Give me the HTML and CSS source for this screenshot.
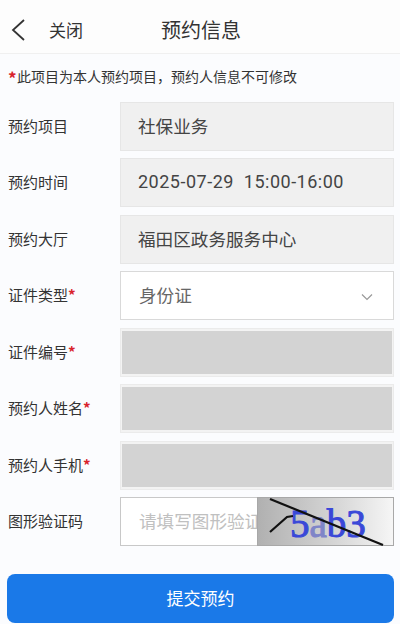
FILE: index.html
```html
<!DOCTYPE html>
<html lang="zh-CN">
<head>
<meta charset="UTF-8">
<meta name="viewport" content="width=device-width, initial-scale=1.0">
<title>预约信息</title>
<link rel="stylesheet" href="styles.css">
</head>
<body>

<div class="header">
  <svg class="back" width="16" height="24" viewBox="0 0 16 24">
    <path d="M14 2 L3 12 L14 22" fill="none" stroke="#333" stroke-width="1.8"/>
  </svg>
  <span class="close">关闭</span>
  <span class="title">预约信息</span>
</div>

<div class="notice"><span class="notice-star">*</span>此项目为本人预约项目，预约人信息不可修改</div>

<div class="form">
  <div class="row">
    <div class="label">预约项目</div>
    <div class="field readonly">社保业务</div>
  </div>
  <div class="row">
    <div class="label">预约时间</div>
    <div class="field readonly time">2025-07-29&nbsp;&nbsp;15:00-16:00</div>
  </div>
  <div class="row">
    <div class="label">预约大厅</div>
    <div class="field readonly">福田区政务服务中心</div>
  </div>
  <div class="row">
    <div class="label">证件类型<span class="star">*</span></div>
    <div class="field select">
      <span>身份证</span>
      <svg class="chevron" width="12" height="8" viewBox="0 0 12 8">
        <path d="M1 1.5 L6 6.5 L11 1.5" fill="none" stroke="#999" stroke-width="1.2"/>
      </svg>
    </div>
  </div>
  <div class="row">
    <div class="label">证件编号<span class="star">*</span></div>
    <div class="field masked"><div class="mask"></div></div>
  </div>
  <div class="row">
    <div class="label">预约人姓名<span class="star">*</span></div>
    <div class="field masked"><div class="mask"></div></div>
  </div>
  <div class="row">
    <div class="label">预约人手机<span class="star">*</span></div>
    <div class="field masked"><div class="mask"></div></div>
  </div>
  <div class="row">
    <div class="label">图形验证码</div>
    <div class="field captcha">
      <span class="placeholder">请填写图形验证码</span>
      <svg class="captcha-img" width="137" height="49" viewBox="0 0 137 49">
        <defs>
          <linearGradient id="captchaBg" x1="0" y1="0" x2="1" y2="0">
            <stop offset="0" stop-color="#b0b0b0"/>
            <stop offset="0.55" stop-color="#d4d4d4"/>
            <stop offset="1" stop-color="#f6f6f6"/>
          </linearGradient>
        </defs>
        <rect width="137" height="49" fill="url(#captchaBg)"/>
        <rect x="0.5" y="0.5" width="136" height="48" fill="none" stroke="#a8a8a8"/>
        <text x="33" y="40" class="captcha-text">5<tspan class="faint">a</tspan>b3</text>
        <path d="M13 2 L126 48" stroke="#111" stroke-width="2.2" fill="none"/>
        <path d="M13 35 L30 20 L36 19" stroke="#111" stroke-width="2.2" fill="none"/>
      </svg>
    </div>
  </div>
</div>

<div class="footer">
  <button class="submit">提交预约</button>
</div>

</body>
</html>
```

FILE: styles.css
```css
body {
  margin: 0;
  width: 400px;
  height: 624px;
  overflow: hidden;
  background: #fbfcfe;
  color: #333;
  font-family: "Noto Sans CJK SC", "Liberation Sans", sans-serif;
}

.header {
  height: 54px;
  box-sizing: border-box;
  display: flex;
  align-items: center;
  padding-left: 10px;
  padding-top: 6px;
  background: #fdfdfd;
  border-bottom: 1px solid #f0f0f0;
}

.close {
  margin-left: 23px;
  width: 112px;
  font-size: 17px;
}

.title {
  font-size: 20px;
}

.notice {
  height: 48px;
  box-sizing: border-box;
  padding: 12px 0 0 8px;
  font-size: 14px;
  line-height: 20px;
}

.notice-star {
  display: inline-block;
  width: 9px;
  color: #d9232c;
  font-size: 17px;
  font-weight: bold;
  line-height: 14px;
  vertical-align: top;
  margin-top: 5px;
}

.star {
  color: #d9232c;
  font-weight: bold;
}

.form {
  display: flex;
  flex-direction: column;
  gap: 7.43px;
}

.row {
  display: flex;
  align-items: center;
  padding: 0 6px 0 8px;
}

.label {
  width: 112px;
  flex-shrink: 0;
  padding-bottom: 2px;
  font-size: 15px;
  white-space: nowrap;
}

.field {
  flex: 1;
  height: 49px;
  box-sizing: border-box;
  display: flex;
  align-items: center;
  padding-bottom: 2px;
  border: 1px solid #d9d9d9;
  background: #fff;
  font-size: 17.6px;
}

.readonly {
  background: #f0f0f0;
  border-color: #e6e6e6;
  padding-left: 17px;
  color: #444;
}

.time {
  font-family: Roboto, "Liberation Sans", sans-serif;
  font-size: 18px;
  letter-spacing: 0.5px;
}

.select {
  justify-content: space-between;
  padding: 0 20px 2px 18px;
  color: #666;
}

.chevron {
  margin-top: 4px;
}

.masked {
  background: #f3f3f3;
  border-color: #ebebeb;
  padding: 2px 1px;
}

.mask {
  width: 100%;
  height: 100%;
  background: #d3d3d3;
}

.captcha {
  position: relative;
  padding-left: 18px;
  border-color: #c8c8c8;
}

.placeholder {
  color: #c0c0c0;
  white-space: nowrap;
}

/* the picture sits over the end of the input */
.captcha-img {
  position: absolute;
  top: -1px;
  right: -1px;
}

.captcha-text {
  font-family: "Liberation Serif", serif;
  font-size: 39px;
  fill: #3a48d8;
  stroke: #3a48d8;
  stroke-width: 1px;
}

.faint {
  fill: #7f85c8;
  stroke: #7f85c8;
}

.footer {
  padding: 28px 6px 0 7px;
}

.submit {
  display: block;
  width: 100%;
  height: 49px;
  padding: 0 0 2px;
  border: none;
  border-radius: 8px;
  background: #1a79e8;
  color: #fff;
  font-family: inherit;
  font-size: 17px;
}
```
